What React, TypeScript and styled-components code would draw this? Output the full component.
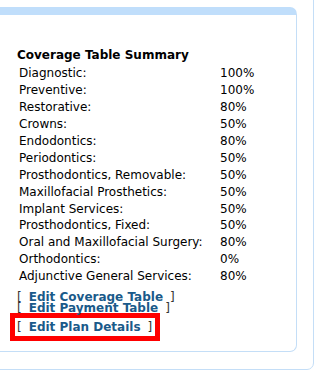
import styled, { createGlobalStyle } from "styled-components";

const GlobalStyle = createGlobalStyle`
  html, body {
    margin: 0;
    padding: 0;
    background: #fff;
    overflow: hidden;
  }
  body {
    font-family: "DejaVu Sans", Verdana, sans-serif;
    font-size: 12px;
    color: #000;
  }
`;

const Frame = styled.div`
  box-sizing: border-box;
  width: 334px;
  margin: -20px 0 0 -20px;
  padding: 26px 16px 17px 10px;
  border: 1px solid #c4def7;
  border-radius: 7px;
`;

const Panel = styled.div`
  border: 1px solid #c4def7;
  border-top: 8px solid #c0defb;
  border-radius: 7px;
  padding: 33px 0 10px 25px;
`;

const Title = styled.div`
  font-weight: bold;
  line-height: 14px;
  margin-bottom: 3px;
`;

const Table = styled.div`
  display: grid;
  grid-template-columns: 201px auto;
  grid-auto-rows: 16.9px;
  align-items: center;
  padding-left: 2px;
`;

const Cell = styled.div`
  line-height: 14px;
  white-space: nowrap;
`;

const Links = styled.div`
  margin-top: 7px;
  line-height: 11.5px;
`;

const LinkLine = styled.div`
  white-space: nowrap;
`;

const Bracket = styled.span`
  color: #333;
`;

const EditLink = styled.a`
  font-weight: bold;
  color: #1a5a8a;
  text-decoration: none;
  margin: 0 7px;
  cursor: pointer;
`;

const Highlight = styled.div`
  width: fit-content;
  white-space: nowrap;
  margin: -2px 0 0 -7px;
  border: 5px solid #ff0000;
  padding: 2px 3px 2px 2px;
  line-height: 14px;
`;

const rows: [string, string][] = [
  ["Diagnostic:", "100%"],
  ["Preventive:", "100%"],
  ["Restorative:", "80%"],
  ["Crowns:", "50%"],
  ["Endodontics:", "80%"],
  ["Periodontics:", "50%"],
  ["Prosthodontics, Removable:", "50%"],
  ["Maxillofacial Prosthetics:", "50%"],
  ["Implant Services:", "50%"],
  ["Prosthodontics, Fixed:", "50%"],
  ["Oral and Maxillofacial Surgery:", "80%"],
  ["Orthodontics:", "0%"],
  ["Adjunctive General Services:", "80%"],
];

const App = () => {
  return (
    <>
      <GlobalStyle />
      <Frame>
        <Panel>
          <Title>Coverage Table Summary</Title>
          <Table>
            {rows.flatMap(([label, value]) => [
              <Cell key={label}>{label}</Cell>,
              <Cell key={label + "-v"}>{value}</Cell>,
            ])}
          </Table>
          <Links>
            <LinkLine>
              <Bracket>[</Bracket>
              <EditLink>Edit Coverage Table</EditLink>
              <Bracket>]</Bracket>
            </LinkLine>
            <LinkLine>
              <Bracket>[</Bracket>
              <EditLink>Edit Payment Table</EditLink>
              <Bracket>]</Bracket>
            </LinkLine>
            <Highlight>
              <Bracket>[</Bracket>
              <EditLink>Edit Plan Details</EditLink>
              <Bracket>]</Bracket>
            </Highlight>
          </Links>
        </Panel>
      </Frame>
    </>
  );
};

export default App;
